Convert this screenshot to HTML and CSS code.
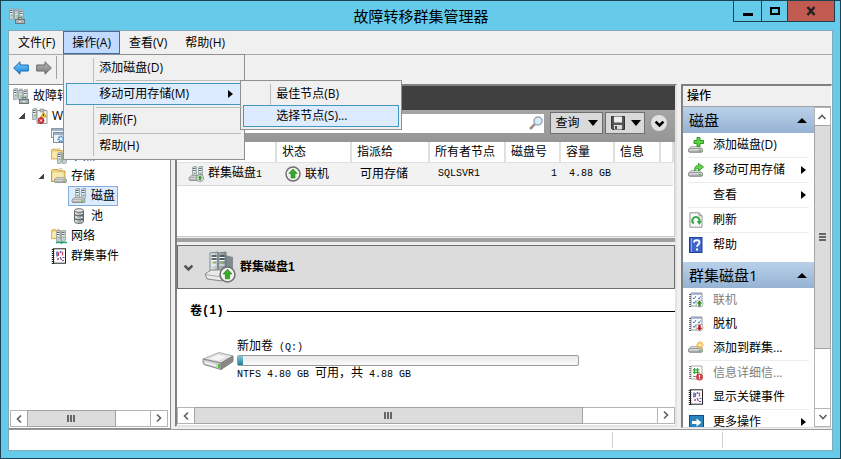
FILE: index.html
```html
<!DOCTYPE html>
<html lang="zh-CN">
<head>
<meta charset="utf-8">
<title>故障转移群集管理器</title>
<link rel="stylesheet" href="styles.css">
</head>
<body>
<svg class="defs" aria-hidden="true">
  <defs>
    <linearGradient id="g-metal" x1="0" y1="0" x2="0" y2="1"><stop offset="0" stop-color="#f6f6f6"/><stop offset="1" stop-color="#9a9a9a"/></linearGradient>
    <linearGradient id="g-blue" x1="0" y1="0" x2="0" y2="1"><stop offset="0" stop-color="#7fd0fb"/><stop offset="1" stop-color="#1583dc"/></linearGradient>
    <linearGradient id="g-gray" x1="0" y1="0" x2="0" y2="1"><stop offset="0" stop-color="#bcbcbc"/><stop offset="1" stop-color="#777"/></linearGradient>
    <linearGradient id="g-rack" x1="0" y1="0" x2="1" y2="0"><stop offset="0" stop-color="#e4ebee"/><stop offset="1" stop-color="#7b878c"/></linearGradient>

    <symbol id="rack" viewBox="0 0 5 12">
      <path d="M.5 1.500 1.500.5h3v10l-1 1h-3z" fill="#c3ccd0" stroke="#8d989d" stroke-width=".7"/>
      <path d="M1 2.500h2.500M1 4.500h2.500" stroke="#5b686f"/><path d="M1 3.500h2.500M1 5.500h2.500" stroke="#f3f7f8"/>
      <path d="M2 7.500h1.500" stroke="#6fc04a"/>
    </symbol>
    <symbol id="drive" viewBox="0 0 16 7">
      <path d="M3 .5h10l2.500 3H.5z" fill="#e8e8e8" stroke="#8b8b8b" stroke-width=".8"/>
      <rect x=".5" y="2.500" width="15" height="4" rx="1.500" fill="url(#g-metal)" stroke="#777" stroke-width=".8"/>
      <rect x="11.500" y="3.800" width="2" height="1.500" fill="#42b62d"/>
    </symbol>
    <symbol id="cluster" viewBox="0 0 16 16">
      <use href="#rack" x="0" y="0" width="5" height="12"/><use href="#rack" x="5" y="0" width="5" height="13"/><use href="#rack" x="10" y="1" width="5" height="12"/>
      <rect x="6.500" y="11.500" width="9" height="4" fill="#aab3b7" stroke="#6c777c"/><path d="M9 11V9.500h4V11" fill="none" stroke="#6c777c"/><path d="M10 13.500h2" stroke="#eee"/>
    </symbol>
    <symbol id="cluster-err" viewBox="0 0 16 16">
      <use href="#rack" x="0" y="0" width="5" height="12"/><path d="M5 2.500h10v13H5z" fill="#f8f8f8" stroke="#999"/><path d="M8 1h4v3H8z" fill="#bbb" stroke="#888" stroke-width=".6"/>
      <path d="M11.500 4l3 5h-6z" fill="#ffd33d" stroke="#b58b14" stroke-width=".7"/><path d="M11.500 6v2" stroke="#333"/>
      <circle cx="9" cy="12.500" r="3" fill="#d42b2b" stroke="#a31616" stroke-width=".6"/><path d="M7.800 11.300l2.400 2.400m0-2.400l-2.400 2.400" stroke="#fff"/>
    </symbol>
    <symbol id="roles" viewBox="0 0 16 16">
      <rect x=".5" y=".5" width="13" height="9" fill="#fff" stroke="#8d99a8"/><path d="M1 2h12" stroke="#9fb1c8" stroke-width="2"/>
      <rect x="2.500" y="4.500" width="13" height="10" fill="#eef3f9" stroke="#7f8da0"/><path d="M3 6h12" stroke="#9fb1c8" stroke-width="2"/>
      <circle cx="10" cy="11" r="2.500" fill="none" stroke="#3f87cd" stroke-width="2" stroke-dasharray="1.500 .7"/>
    </symbol>
    <symbol id="folder" viewBox="0 0 16 16">
      <path d="M.5 13.500V2.500l1-1h5l1 1.500h6.500v10.500z" fill="#efd27c" stroke="#c5a04b"/><path d="M1.500 4.500h11v8h-11z" fill="#fae9ae"/><path d="M8 .7h3v1.800H8z" fill="#fff" stroke="#c5a04b" stroke-width=".6"/>
    </symbol>
    <symbol id="nodes" viewBox="0 0 16 16"><use href="#folder" x="0" y="0" width="13" height="13"/><use href="#rack" x="6" y="4" width="5" height="12"/><use href="#rack" x="11" y="4" width="5" height="12"/></symbol>
    <symbol id="storage" viewBox="0 0 16 16"><use href="#folder" width="16" height="16"/><use href="#drive" x="3" y="9" width="13" height="6"/></symbol>
    <symbol id="network" viewBox="0 0 16 16"><use href="#folder" width="12" height="13"/><use href="#rack" x="5" y="2" width="5" height="12"/><use href="#rack" x="10" y="2" width="5" height="12"/><path d="M5 14.500h11M10.500 13v3" stroke="#25a76a" stroke-width="1.500"/></symbol>
    <symbol id="disk" viewBox="0 0 16 16"><use href="#rack" x="4" y="0" width="5" height="12"/><use href="#rack" x="10" y="0" width="5" height="12"/><use href="#drive" x="0" y="9" width="15" height="6"/></symbol>
    <symbol id="up" viewBox="0 0 16 16"><circle cx="8" cy="8" r="7" fill="#f1f1f1" stroke="#707070" stroke-width="1.500"/><path d="M8 3l4.200 4.500H10V12H6V7.500H3.800z" fill="#35ad28" stroke="#1c7d14" stroke-width=".6"/></symbol>
    <symbol id="disk-up" viewBox="0 0 16 16"><use href="#disk" width="16" height="16"/><use href="#up" x="8" y="8" width="8" height="8"/></symbol>
    <symbol id="pool" viewBox="0 0 16 16">
      <path d="M3.500 2.500v11c0 2.600 9 2.600 9 0v-11z" fill="url(#g-rack)" stroke="#6a6a6a"/><ellipse cx="8" cy="2.500" rx="4.500" ry="1.800" fill="#ececec" stroke="#6a6a6a"/>
      <path d="M3.500 6c0 2.400 9 2.400 9 0M3.500 10c0 2.400 9 2.400 9 0" fill="none" stroke="#555"/><path d="M10 5.500h1.500M10 9.500h1.500M10 13.300h1.500" stroke="#f5f5f5"/>
    </symbol>
    <symbol id="events" viewBox="0 0 16 16">
      <rect x="2.500" y=".8" width="12" height="14.400" fill="#fff" stroke="#222"/><path d="M2 1v15" stroke="#222" stroke-width="2.500" stroke-dasharray="1 1"/>
      <path d="M6 3.500v5M9.500 3v2" stroke="#4a69c4" stroke-width="1.500"/><path d="M7.500 4v4M11.500 3.500v4M6 11h2" stroke="#cf4660" stroke-width="1.300"/><path d="M9 9l1.500 3M11.500 9.500h2M11 12.500h2" stroke="#6a52a8" stroke-width="1.200"/>
    </symbol>
    <symbol id="checklist" viewBox="0 0 16 16">
      <path d="M3 1h11v13H3z" fill="#fff" stroke="#8d939e"/><path d="M3.500 2h10" stroke="#8da6c8" stroke-width="1.500"/><path d="M2 2v13" stroke="#666" stroke-width="2" stroke-dasharray="1 1"/>
      <path d="M5 5.500l1 1.500 2-3M5 10l1 1.500 2-3M10 6l1 1 1.500-2.500" fill="none" stroke="#3b7ac3"/>
    </symbol>
    <symbol id="online" viewBox="0 0 16 16"><use href="#checklist" width="16" height="16"/><circle cx="11.500" cy="11.500" r="3.600" fill="#fff" stroke="#999" stroke-width=".7"/><path d="M11.500 8.500l3 3h-1.800V14.500h-2.400v-3H8.500z" fill="#2b8f22"/></symbol>
    <symbol id="offline" viewBox="0 0 16 16"><use href="#checklist" width="16" height="16"/><circle cx="11.500" cy="11.500" r="3.600" fill="#fff" stroke="#999" stroke-width=".7"/><path d="M11.500 14.700l3-3h-1.800V8.700h-2.400v3H8.500z" fill="#b51c1c"/></symbol>
    <symbol id="disk-add" viewBox="0 0 16 16"><use href="#drive" x="0" y="9" width="15" height="7"/><path d="M9 .5h3v3h3.500v3H12v3H9v-3H6v-3h3z" fill="#5fd646" stroke="#238c19" stroke-width=".9"/></symbol>
    <symbol id="disk-move" viewBox="0 0 16 16"><use href="#drive" x="0" y="8" width="15" height="7"/><path d="M6.500 9c0-4 1-5.500 4-5.500V1.300L15.500 5l-5 4V6.500C8.500 6.500 8 7 6.500 9z" fill="#64d44b" stroke="#238c19" stroke-width=".8"/></symbol>
    <symbol id="disk-new" viewBox="0 0 16 16"><use href="#drive" x="0" y="6" width="15" height="7"/><path d="M12 1v8M8 5h8M9.300 2.300l5.400 5.400M14.700 2.300L9.300 7.700" stroke="#eda62a" stroke-width="1.100"/><circle cx="12" cy="5" r="1.600" fill="#fff2a0"/></symbol>
    <symbol id="refresh" viewBox="0 0 16 16"><path d="M2 .8h9l3 3v11.400H2z" fill="#f7fbf5" stroke="#929292"/><path d="M11 .8v3h3" fill="none" stroke="#929292"/><path d="M5.800 11.500A3.600 3.600 0 1 1 11.500 9" fill="none" stroke="#33a548" stroke-width="2"/><path d="M8.800 9h5l-2.500 4z" fill="#33a548"/></symbol>
    <symbol id="help" viewBox="0 0 16 16"><rect x="1.500" y=".5" width="12.500" height="15" fill="#3f66c8" stroke="#213f94"/><path d="M3.500 1v14" stroke="#86a4ec"/><path d="M6 5.500c0-3 5.500-3 5.500 0 0 2-2.500 2-2.500 4.300" fill="none" stroke="#fff" stroke-width="1.800"/><rect x="8" y="11.500" width="2" height="2" fill="#fff"/></symbol>
    <symbol id="info" viewBox="0 0 16 16"><path d="M3 1h11v13H3z" fill="#fff" stroke="#aaa"/><path d="M2 1v14" stroke="#777" stroke-width="2" stroke-dasharray="1 1"/><path d="M6.500 3v6M9.500 3v6M5 4.800h6.500M5 7.300h6.500" stroke="#39a43a" stroke-width="1.200"/><path d="M5 11.500h4" stroke="#888"/><circle cx="11.500" cy="12" r="3.400" fill="#cf3f46"/><path d="M11.500 10v2.500m0 .7v1" stroke="#fff" stroke-width="1.200"/></symbol>
    <symbol id="more" viewBox="0 0 16 16"><rect x="1.500" y="1.500" width="14" height="14" fill="#2b83bd" stroke="#0f4f86"/><path d="M4 7h4.500V4.500L13.500 8.500l-5 4V10H4z" fill="#fff"/></symbol>
    <symbol id="back" viewBox="0 0 16 16"><path d="M.7 8L7 1.800V5h8.300v6H7v3.200z" fill="url(#g-blue)" stroke="#1b6cb5"/></symbol>
    <symbol id="forward" viewBox="0 0 16 16"><path d="M15.300 8L9 1.800V5H.7v6H9v3.200z" fill="url(#g-gray)" stroke="#696969"/></symbol>
    <symbol id="save" viewBox="0 0 16 16"><path d="M1.500 1.500h13v13h-12l-1-1z" fill="#555" stroke="#333"/><rect x="4" y="1.500" width="8" height="6" fill="#eee"/><rect x="4" y="10" width="8" height="4.500" fill="#ddd"/><rect x="5" y="11" width="2" height="3" fill="#444"/></symbol>
    <symbol id="search" viewBox="0 0 16 16"><path d="M2 14l5-5" stroke="#9b8f86" stroke-width="2.500"/><circle cx="10" cy="6" r="4" fill="#d9ecf9" stroke="#9aa9b5" stroke-width="1.500"/></symbol>
    <symbol id="chev" viewBox="0 0 10 10"><path d="M2 3.500l3 3 3-3" fill="none" stroke="currentColor" stroke-width="2"/></symbol>
    <symbol id="thin" viewBox="0 0 10 10"><path d="M7 1.500L3.500 5 7 8.500" fill="none" stroke="#606060" stroke-width="1.600"/></symbol>
    <symbol id="big-disk" viewBox="0 0 32 32">
      <path d="M21 4l8 2v20l-8 1z" fill="#7f8b8f"/><path d="M6 2l8-1v22H6zM14 2l8-1v23h-8z" fill="url(#g-rack)" stroke="#67757b" stroke-width=".8"/>
      <path d="M7.500 5h5M7.500 8h5M15.500 5h5M15.500 8h5" stroke="#34454e" stroke-width="1.300"/><path d="M7.500 6.500h5M7.500 9.500h5M15.500 6.500h5M15.500 9.500h5M7.500 14h5M15.500 14h5" stroke="#fff"/><path d="M9 11.500h3M17 11.500h3" stroke="#8aba3f" stroke-width="1.500"/>
      <path d="M1 23l6-4h15l-4 6v5L3 28z" fill="#e9e9e9" stroke="#888"/><path d="M1 23.500l17 2.500" stroke="#aaa"/><use href="#up" x="15" y="15" width="17" height="17"/>
    </symbol>
    <symbol id="big-drive" viewBox="0 0 32 20">
      <path d="M1 8L17 1.500l14 3.500-12 7z" fill="#e1e1e1" stroke="#aaa"/><path d="M1 8l18 4v6.500L2 13.500c-1-1-1-4-1-5.500z" fill="#cfcfcf" stroke="#888"/><path d="M19 12l12-7v5.500l-12 8z" fill="#888" stroke="#808080"/>
      <path d="M7 8l9-4 8 1.500-7 4z" fill="#f5f5f5"/><path d="M3 10.500l11 3v2l-11-3z" fill="#efefef"/><path d="M17 13v4" stroke="#54c52d" stroke-width="2"/>
    </symbol>
  </defs>
</svg>

<header class="titlebar">
  <svg class="icon"><use href="#cluster"/></svg>
  <h1>故障转移群集管理器</h1>
  <div class="window-buttons">
    <button class="min" aria-label="最小化"><svg viewBox="0 0 12 12"><path d="M1 9.500h10" stroke="#000" stroke-width="3"/></svg></button>
    <button class="max" aria-label="最大化"><svg viewBox="0 0 12 12"><rect x="2" y="3" width="8" height="6" fill="none" stroke="#000" stroke-width="2"/></svg></button>
    <button class="close" aria-label="关闭"><svg viewBox="0 0 12 12"><path d="M2.500 2l7 8M9.500 2l-7 8" stroke="#222" stroke-width="2.500"/></svg></button>
  </div>
</header>

<div class="client">
  <nav class="menubar">
    <button>文件(F)</button>
    <div class="menu-host">
      <button class="open" aria-expanded="true">操作(A)</button>
      <div class="menu">
        <button>添加磁盘(D)</button>
        <div class="sub-host">
          <button class="active" aria-expanded="true">移动可用存储(M)<span class="tri-right"></span></button>
          <div class="menu submenu">
            <button>最佳节点(B)</button>
            <button class="active">选择节点(S)...</button>
          </div>
        </div>
        <button>刷新(F)</button>
        <button>帮助(H)</button>
      </div>
    </div>
    <button>查看(V)</button>
    <button>帮助(H)</button>
  </nav>
  <div class="toolbar">
    <button aria-label="后退"><svg class="icon"><use href="#back"/></svg></button>
    <button aria-label="前进"><svg class="icon"><use href="#forward"/></svg></button>
    <span class="divider"></span>
  </div>

  <main class="panes">
    <aside class="tree-pane">
      <ul class="tree">
        <li class="root"><a href="#"><svg class="icon"><use href="#cluster"/></svg>故障转</a></li>
        <li class="l1"><span class="twist"></span><a href="#"><svg class="icon"><use href="#cluster-err"/></svg>W</a></li>
        <li class="l2"><span class="twist none"></span><a href="#"><svg class="icon"><use href="#roles"/></svg>角色</a></li>
        <li class="l2"><span class="twist none"></span><a href="#"><svg class="icon"><use href="#nodes"/></svg>节点</a></li>
        <li class="l2"><span class="twist"></span><a href="#"><svg class="icon"><use href="#storage"/></svg>存储</a></li>
        <li class="l3"><a href="#" class="selected"><svg class="icon"><use href="#disk"/></svg>磁盘</a></li>
        <li class="l3"><a href="#"><svg class="icon"><use href="#pool"/></svg>池</a></li>
        <li class="l2"><span class="twist none"></span><a href="#"><svg class="icon"><use href="#network"/></svg>网络</a></li>
        <li class="l2"><span class="twist none"></span><a href="#"><svg class="icon"><use href="#events"/></svg>群集事件</a></li>
      </ul>
      <div class="hscroll">
        <button aria-label="向左"><svg><use href="#thin"/></svg></button>
        <div class="track"><div class="thumb tree-thumb"><i></i><i></i><i></i></div></div>
        <button class="flip" aria-label="向右"><svg><use href="#thin"/></svg></button>
      </div>
    </aside>

    <section class="center">
      <div class="dark"></div>
      <div class="searchbar">
        <div class="searchbox"><input type="search" aria-label="搜索"><svg class="icon"><use href="#search"/></svg></div>
        <button class="tool query">查询<span class="tri-down"></span></button>
        <button class="tool" aria-label="保存"><svg class="icon"><use href="#save"/></svg><span class="tri-down"></span></button>
        <button class="round" aria-label="展开"><svg><use href="#chev"/></svg></button>
      </div>
      <div class="list">
        <table>
          <colgroup><col class="c-name"><col class="c-state"><col class="c-assign"><col class="c-owner"><col class="c-num"><col class="c-size"><col class="c-info"><col></colgroup>
          <thead><tr><th></th><th>状态</th><th>指派给</th><th>所有者节点</th><th>磁盘号</th><th>容量</th><th>信息</th><th></th></tr></thead>
          <tbody><tr>
            <td><div class="cell name"><svg class="icon"><use href="#disk-up"/></svg><span>群集磁盘<span class="mono">1</span></span></div></td>
            <td><div class="cell state"><svg class="icon"><use href="#up"/></svg>联机</div></td>
            <td>可用存储</td><td class="mono">SQLSVR1</td><td class="mono num">1</td><td class="mono">4.88 GB</td><td></td><td></td>
          </tr></tbody>
        </table>
      </div>
      <div class="splitter"></div>
      <div class="detail-head">
        <button aria-label="折叠"><svg><use href="#chev"/></svg></button>
        <svg class="big"><use href="#big-disk"/></svg>
        <h2>群集磁盘1</h2>
      </div>
      <div class="detail">
        <h3>卷<span class="mono">(1)</span></h3>
        <div class="volume">
          <svg><use href="#big-drive"/></svg>
          <div class="volume-info">
            <span>新加卷<span class="mono"> (Q:)</span></span>
            <div class="bar"><div class="fill"></div></div>
            <span><span class="mono">NTFS 4.80 GB </span>可用，共<span class="mono"> 4.88 GB</span></span>
          </div>
        </div>
      </div>
      <div class="hscroll">
        <button aria-label="向左"><svg><use href="#thin"/></svg></button>
        <div class="track"><div class="thumb center-thumb"><i></i><i></i><i></i></div></div>
        <button class="flip" aria-label="向右"><svg><use href="#thin"/></svg></button>
      </div>
    </section>

    <aside class="actions">
      <h2>操作</h2>
      <div class="actions-body">
        <div class="actions-list">
          <h3>磁盘<span class="tri-up"></span></h3>
          <ul class="roomy">
            <li class="line"><button><svg class="icon"><use href="#disk-add"/></svg>添加磁盘(D)</button></li>
            <li class="line"><button><svg class="icon"><use href="#disk-move"/></svg>移动可用存储<span class="tri-right"></span></button></li>
            <li class="line"><button><span class="icon"></span>查看<span class="tri-right"></span></button></li>
            <li class="line"><button><svg class="icon"><use href="#refresh"/></svg>刷新</button></li>
            <li><button><svg class="icon"><use href="#help"/></svg>帮助</button></li>
          </ul>
          <h3>群集磁盘1<span class="tri-up"></span></h3>
          <ul>
            <li><button disabled><svg class="icon"><use href="#online"/></svg>联机</button></li>
            <li><button><svg class="icon"><use href="#offline"/></svg>脱机</button></li>
            <li class="line"><button><svg class="icon"><use href="#disk-new"/></svg>添加到群集...</button></li>
            <li><button disabled><svg class="icon"><use href="#info"/></svg>信息详细信...</button></li>
            <li class="line"><button><svg class="icon"><use href="#events"/></svg>显示关键事件</button></li>
            <li><button><svg class="icon"><use href="#more"/></svg>更多操作<span class="tri-right"></span></button></li>
          </ul>
        </div>
        <div class="vscroll">
          <button class="turn-up" aria-label="向上"><svg><use href="#thin"/></svg></button>
          <div class="track"><div class="thumb"><i></i><i></i><i></i></div></div>
          <button class="turn-down" aria-label="向下"><svg><use href="#thin"/></svg></button>
        </div>
      </div>
    </aside>
  </main>

  <footer class="status"><span class="grow"></span><span></span><span></span></footer>
</div>
</body>
</html>
```
FILE: styles.css
```css
* { box-sizing: border-box; }
body {
  margin: 0; height: 100vh; display: flex; flex-direction: column; overflow: hidden;
  border: 1px solid #1d4254; padding: 0 7px 7px; background: #66caea; color: #000;
  font: 12px/20px "Open Sans", "Noto Sans CJK SC", sans-serif;
}
button { font: inherit; color: inherit; border: 0; padding: 0; margin: 0; background: none; white-space: nowrap; }
h1, h2, h3, ul { margin: 0; padding: 0; }
ul { list-style: none; }
a { color: inherit; text-decoration: none; }
svg { display: block; flex: none; }
.defs { position: absolute; width: 0; height: 0; }
.icon { width: 16px; height: 16px; flex: none; }
.mono { font-family: "Liberation Mono", monospace; font-size: 10px; white-space: pre; }

.titlebar { display: grid; grid-template-columns: 1fr auto 1fr; flex: none; height: 29px; align-items: center; padding-left: 1px; }
.titlebar h1 { font-size: 15px; font-weight: 400; line-height: 26px; }
.window-buttons { display: flex; justify-self: end; align-self: start; height: 21px; border: 1px solid #1d3f50; border-top: 0; margin-right: -2px; }
.window-buttons button { display: grid; place-items: center; width: 28px; border-right: 1px solid #1d3f50; }
.window-buttons svg { width: 12px; height: 12px; }
.window-buttons .max { width: 26px; }
.window-buttons .close { width: 46px; border: 0; background: #c15b52; }

.client { flex: 1; min-height: 0; display: flex; flex-direction: column; border: 1px solid #82a9b8; background: #f0f0f0; }
.menubar { display: flex; flex: none; height: 24px; border-bottom: 1px solid #a8a8a8; padding-left: 1px; }
.menubar > button, .menu-host > button { height: 23px; padding: 0 8px; }
.menubar > button:not(:first-child) { padding: 0 9px; }
.menubar .open { border: 1px solid #3c6ea5; background: #c0dbff; padding: 0 8px; }
.menu-host { position: relative; z-index: 5; }
.menu {
  position: absolute; top: 23px; left: 0; width: 182px; padding: 2px; background: #f0f0f0;
  border: 1px solid #909090;
}
.menu::before { content: ""; position: absolute; left: 29px; top: 3px; bottom: 3px; border-left: 1px solid #bdbdbd; }
.menu button { position: relative; display: flex; align-items: center; width: 100%; height: 22px; padding: 0 8px 0 32px; border: 1px solid transparent; }
.menu > button + button, .menu > .sub-host, .menu > .sub-host + button { margin-top: 4px; }
.menu > .sub-host::before, .menu > .sub-host::after, .menu > button + button::before { content: ""; position: absolute; left: 30px; right: 0; top: -3px; border-top: 1px solid #bdbdbd; }
.menu > .sub-host::after { top: auto; bottom: -3px; }
.menu button.active { background: #dcebff; border-color: #4796bd; }
.menu .tri-right { margin-left: auto; }
.sub-host { position: relative; }
.menu .submenu { top: -3px; left: 174px; width: 162px; }
.submenu::before { bottom: 24px; }
.menu .submenu > button + button { margin-top: 0; }
.submenu > button + button::before { display: none; }

.tri-right { border-left: 5px solid #000; border-top: 4px solid transparent; border-bottom: 4px solid transparent; }
.tri-down { border-top: 6px solid #000; border-left: 5px solid transparent; border-right: 5px solid transparent; }
.tri-up { border-bottom: 5px solid #000; border-left: 5px solid transparent; border-right: 5px solid transparent; }

.toolbar { display: flex; flex: none; height: 29px; gap: 7px; padding: 1px 4px 5px; }
.toolbar .divider { border-left: 1px solid #a0a0a0; margin-left: -3px; }

.panes { flex: 1; min-height: 0; display: grid; grid-template: minmax(0, 1fr) / 162px minmax(0, 1fr) 151px; gap: 4px; }
.tree-pane { display: flex; flex-direction: column; justify-content: space-between; min-width: 0; background: #fff; border: 1px solid #8a8a8a; border-left: 0; padding: 1px 2px 1px 0; }
.tree { overflow: hidden; }
.tree li { display: flex; align-items: center; height: 20px; }
.tree a { display: flex; align-items: center; gap: 4px; height: 20px; padding: 0 3px; white-space: nowrap; }
.tree a.selected { background: #dcebfd; outline: 1px solid #84acdd; outline-offset: -1px; }
.root { padding-left: 1px; }
.l1 { padding-left: 10px; }
.l2 { padding-left: 29px; }
.l3 { padding-left: 59px; }
.twist { width: 10px; height: 6px; flex: none; background: linear-gradient(135deg, transparent 50%, #444 50%) 0 0 / 6px 6px no-repeat; }
.twist.none { background: none; }

.hscroll { display: flex; flex: none; height: 17px; border: 1px solid #b5b5b5; background: #fff; margin-left: 1px; }
.hscroll button { display: grid; place-items: center; width: 16px; }
.hscroll svg, .vscroll svg { width: 10px; height: 10px; }
.flip { transform: rotate(180deg); }
.track { flex: 1; display: flex; }
.thumb { display: flex; align-items: center; justify-content: center; gap: 1px; background: #dcdcdc; border: 1px solid #a3a3a3; }
.thumb i { width: 2px; height: 7px; background: #666; }
.hscroll .thumb { margin: -1px 0; }
.tree-thumb { width: 72%; }
.center-thumb { width: 84%; }
.hscroll .track { border-right: 1px solid #b5b5b5; }

.center { display: flex; flex-direction: column; min-width: 0; margin-bottom: 2px; background: #fff; border: 2px solid #808080; border-right-color: #e3e3e3; border-bottom-color: #e3e3e3; font-family: "Liberation Sans", "Noto Sans CJK SC", sans-serif; }
.dark { flex: none; height: 24px; background: #404040; }
.searchbar { display: flex; flex: none; align-items: center; height: 32px; gap: 2px; padding: 2px 8px 8px 0; background: linear-gradient(#a5a5a5, #969696); }
.searchbox { display: flex; align-items: center; flex: 1; height: 19px; margin-right: 4px; background: #fff; }
.searchbox input { flex: 1; min-width: 0; height: 17px; border: 0; outline: 0; background: none; }
.tool { display: flex; align-items: center; justify-content: center; gap: 5px; height: 22px; width: 40px; border: 1px solid #707070; background: #d9d9d9; }
.query { width: 53px; gap: 8px; }
.round { width: 16px; height: 16px; margin-left: 4px; border-radius: 50%; background: #e1e1e1; display: grid; place-items: center; }
.round svg, .detail-head button svg { width: 13px; height: 13px; }

.list { flex: none; height: 95px; border-bottom: 1px solid #c8c8c8; border-right: 1px solid #d0d0d0; }
table { width: 100%; table-layout: fixed; border-collapse: collapse; }
th, td { padding: 0 0 0 9px; font-weight: 400; text-align: left; white-space: nowrap; }
th { height: 20px; padding-left: 5px; border-right: 2px solid #e0e0e0; border-bottom: 1px solid #e0e0e0; }
td { height: 22px; background: #f2f2f2; border-bottom: 1px solid #d9d9d9; }
.num { text-align: right; padding-right: 3px; }
.c-name { width: 99px; }
.c-state { width: 75px; }
.c-assign { width: 78px; }
.c-owner { width: 76px; }
.c-num { width: 55px; }
.c-size { width: 54px; }
.c-info { width: 46px; }
.cell { display: flex; align-items: center; gap: 4px; }
.name { margin-left: 2px; }

.splitter { flex: none; height: 8px; background: #a0a0a0; border-top: 1px solid #f0f0f0; border-bottom: 3px solid #f0f0f0; }
.detail-head { display: flex; flex: none; align-items: center; height: 44px; padding-left: 4px; border: 1px solid #6e6e6e; background: #dcdcdc; color: #000; }
.detail-head button { color: #555; }
.big { width: 32px; height: 32px; margin: 0 4px 0 9px; }
.detail-head h2 { font-size: 12px; }
.detail { flex: 1; min-height: 0; padding: 12px 0 0 13px; overflow: hidden; }
.detail h3 { display: flex; align-items: center; font-size: 12px; line-height: 20px; }
.detail h3 .mono { font-size: 12px; }
.detail h3::after { content: ""; flex: 1; margin-left: 3px; border-top: 1px solid #000; }
.volume { display: flex; align-items: center; gap: 3px; margin: 18px 0 0 12px; }
.volume > svg { width: 32px; height: 20px; }
.volume-info { display: flex; flex-direction: column; flex: 1; line-height: 15px; }
.bar { width: 78%; height: 11px; border: 1px solid #999; border-radius: 2px; background: linear-gradient(#e8e8e8, #fafafa); }
.fill { width: 5px; height: 100%; background: linear-gradient(#86c6d5, #1b819c); }
.center .hscroll { margin: 0 0 1px; }

.actions { display: flex; flex-direction: column; min-width: 0; margin-bottom: 1px; background: #fff; border: 2px solid #808080; border-right: 1px solid #fff; border-bottom: 1px solid #ddd; }
.actions h2 { flex: none; height: 21px; padding-left: 4px; font-size: 12px; font-weight: 500; border-bottom: 1px solid #a0a0a0; background: #f0f0f0; }
.actions-body { flex: 1; min-height: 0; display: flex; }
.actions-list { flex: 1; min-width: 0; overflow: hidden; }
.actions h3 { display: flex; align-items: center; justify-content: space-between; height: 26px; padding: 0 7px 0 6px; font-size: 15px; font-weight: 400; background: linear-gradient(#b9d0e9, #96b2d3); }
.actions li { padding: 0 5px; }
.actions li button { display: flex; align-items: center; width: 100%; height: 24px; }
.actions li .icon { margin-right: 9px; }
.actions li .tri-right { margin: 0 3px 0 auto; }
.actions li.line::after { content: ""; display: block; border-top: 1px solid #ececec; }
.actions li button:disabled { color: #808080; }
.roomy { padding-bottom: 5px; }
.vscroll { display: flex; flex-direction: column; width: 17px; border: 1px solid #b5b5b5; }
.vscroll button { display: grid; place-items: center; height: 17px; flex: none; }
.turn-up { transform: rotate(90deg); }
.turn-down { transform: rotate(-90deg); }
.vscroll .track { display: block; border-bottom: 1px solid #b5b5b5; }
.vscroll .thumb { flex-direction: column; height: 79%; margin: 0 -1px; }
.vscroll .thumb i { width: 7px; height: 2px; }

.status { display: flex; flex: none; height: 21px; border-top: 1px solid #999; background: #fff; }
.status span { width: 110px; margin: 2px 0; border-left: 1px solid #d0d0d0; }
.status .grow { flex: 1; border: 0; }
```
